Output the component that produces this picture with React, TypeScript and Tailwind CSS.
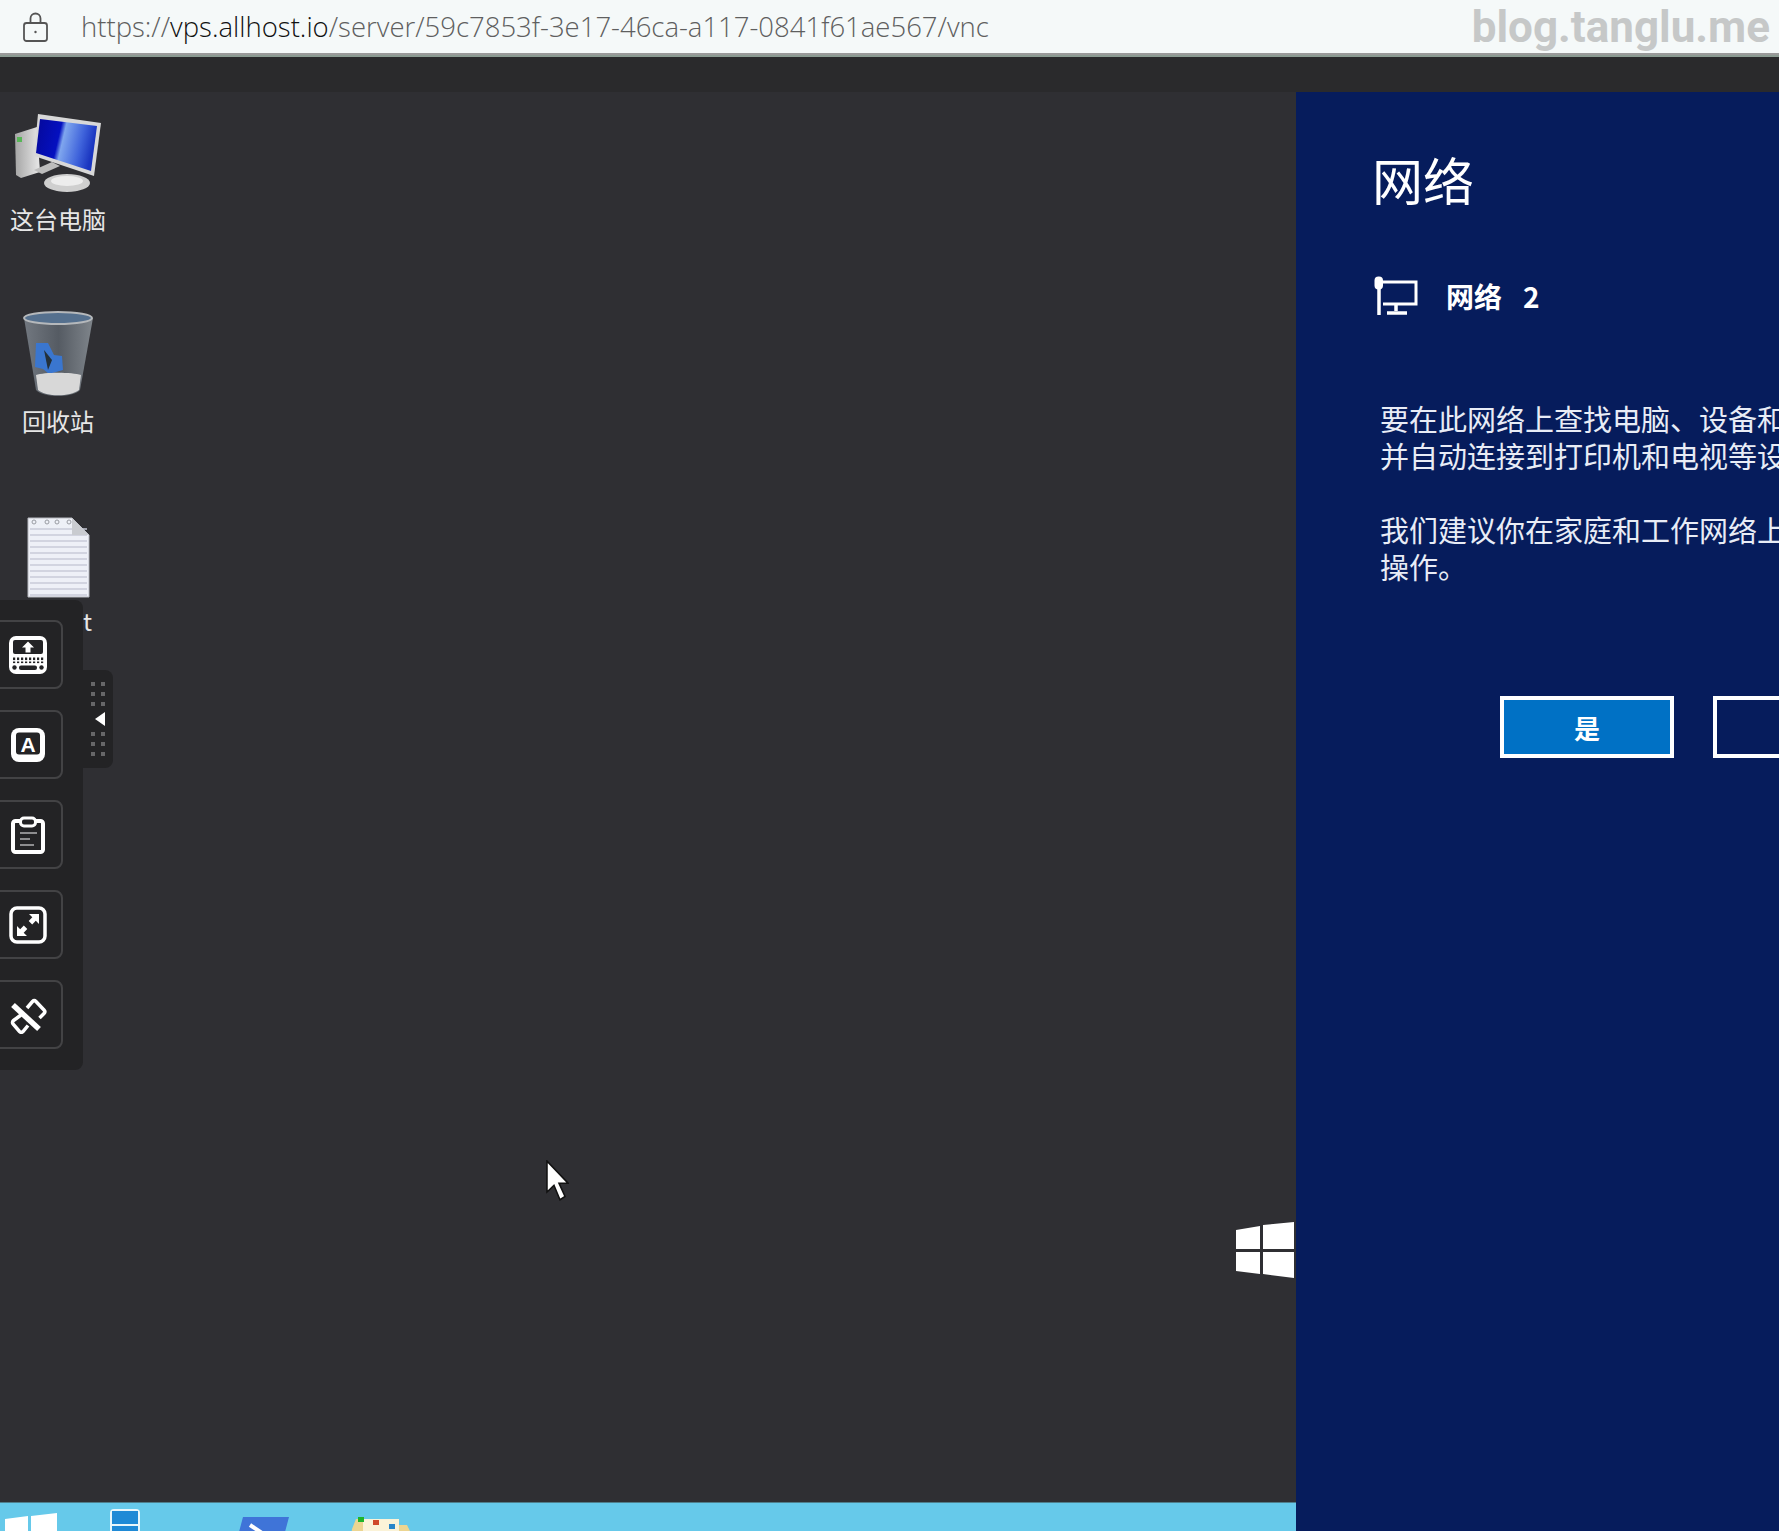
import React from "react";

const cjk = "font-['Noto_Sans_CJK_SC','Noto_Sans',sans-serif]";

function ToolButton({ children }: { children: React.ReactNode }) {
  return (
    <div className="h-[69px] w-[71px] -ml-[8px] shrink-0 rounded-lg border-2 border-[#434345] flex items-center justify-center pl-px">
      {children}
    </div>
  );
}

function KeyboardIcon() {
  return (
    <svg width="38" height="38" viewBox="0 0 38 38">
      <rect width="38" height="38" rx="7" fill="#fff" />
      <rect x="4" y="4" width="30" height="14" rx="2" fill="#232325" />
      <path d="M19 5.500l6 6h-3.500v5h-5v-5H13z" fill="#fff" />
      <g fill="#232325">
        {[5, 9, 13, 17, 21, 25, 29, 33].map((x) => (
          <rect key={x} x={x - 1} y="21.500" width="2.200" height="2.600" />
        ))}
        {[5, 9, 13, 17, 21, 25, 29, 33].map((x) => (
          <rect key={x} x={x - 1} y="25.500" width="2.200" height="1.600" />
        ))}
        <circle cx="5.500" cy="31.500" r="2.200" />
        <rect x="10" y="29.500" width="18" height="4.500" rx="2" />
        <circle cx="32.500" cy="31.500" r="2.200" />
      </g>
    </svg>
  );
}

function LetterIcon() {
  return (
    <svg width="34" height="34" viewBox="0 0 34 34">
      <rect width="34" height="34" rx="8" fill="#fff" />
      <rect x="5" y="4.500" width="24" height="22" rx="3" fill="#232325" />
      <text x="17" y="23.500" textAnchor="middle" fontFamily="Liberation Sans" fontWeight="700" fontSize="21" fill="#fff">
        A
      </text>
    </svg>
  );
}

function ClipboardIcon() {
  return (
    <svg width="34" height="38" viewBox="11 816 34 38">
      <rect x="13" y="821" width="30" height="31" rx="2.500" fill="none" stroke="#fff" strokeWidth="4" />
      <rect x="20.500" y="818" width="15" height="8" rx="3.500" fill="#232325" stroke="#fff" strokeWidth="3" />
      <path d="M20 833h17M20 839h10M20 845h14" stroke="#8d8d8f" strokeWidth="2" />
    </svg>
  );
}

function FullscreenIcon() {
  return (
    <svg width="38" height="38" viewBox="9 906 38 38">
      <rect x="11" y="908" width="34" height="34" rx="6" fill="none" stroke="#fff" strokeWidth="3.500" />
      <path d="M29 914h10v10l-3.200-3.200-3.600 3.600-3.500-3.500 3.600-3.600zM27 936H17v-10l3.200 3.200 3.600-3.600 3.500 3.500-3.600 3.600z" fill="#fff" />
    </svg>
  );
}

function DisconnectIcon() {
  return (
    <svg width="38" height="38" viewBox="9 996 38 38" fill="none" stroke="#fff">
      <path d="M27 1008l5.500-6.500a2.500 2.500 0 0 1 3.500 0l8 8.500a2.500 2.500 0 0 1 0 3.500l-4.500 4.500" strokeWidth="3.500" />
      <path d="M21 1015l-7.500 5.500a2.500 2.500 0 0 0-.5 3.500l6.500 7.500a2.500 2.500 0 0 0 3.500 0l5-6" strokeWidth="3.500" />
      <path d="M13 1005l26 24" strokeWidth="5.500" />
    </svg>
  );
}

function ComputerIcon() {
  return (
    <svg className="blur-[0.5px]" width="90" height="80" viewBox="13 112 90 80">
      <defs>
        <linearGradient id="scr" x1="0" y1="0" x2="1" y2="0.2">
          <stop offset="0" stopColor="#05089a" />
          <stop offset="0.42" stopColor="#0410c0" />
          <stop offset="0.5" stopColor="#7fa6ee" />
          <stop offset="0.8" stopColor="#3f63db" />
          <stop offset="1" stopColor="#1a35c0" />
        </linearGradient>
        <linearGradient id="tower" x1="0" y1="0" x2="1" y2="0">
          <stop offset="0" stopColor="#a5a5a5" />
          <stop offset="1" stopColor="#e8e8e8" />
        </linearGradient>
      </defs>
      <path d="M15 134l22-7 3 45-19 6-5-3z" fill="url(#tower)" />
      <rect x="17" y="137" width="5" height="5" fill="#57b657" />
      <path d="M34 170l18-8 8 4-18 8z" fill="#bdbdbd" />
      <ellipse cx="67" cy="183" rx="23" ry="9" fill="#cfcfcf" />
      <ellipse cx="67" cy="181" rx="16" ry="5" fill="#ededed" />
      <path d="M38 114l63 9-7 53-60-20z" fill="#d8d8d8" />
      <path d="M40 119l57 7-6 45-55-18z" fill="url(#scr)" />
    </svg>
  );
}

function BinIcon() {
  return (
    <svg className="blur-[0.5px]" width="72" height="92" viewBox="22 308 72 92">
      <defs>
        <linearGradient id="bin" x1="0" y1="0" x2="1" y2="0">
          <stop offset="0" stopColor="#727880" />
          <stop offset="0.5" stopColor="#555b63" />
          <stop offset="1" stopColor="#7f858b" />
        </linearGradient>
      </defs>
      <path d="M24 318l12 72c8 8 36 8 44 0l13-72z" fill="url(#bin)" />
      <ellipse cx="58" cy="318" rx="34" ry="6" fill="#55708e" stroke="#b5b8bb" strokeWidth="2" />
      <path d="M36 343h12l6 12 8 1 1 14-14 4-6-5-8-2z" fill="#3a76cf" />
      <path d="M44 350l8 10-4 10z" fill="#23303a" />
      <path d="M36 375c8-3 36-3 45 0l-2 15c-9 7-33 7-41 0z" fill="#d8d8d8" />
    </svg>
  );
}

function TextFileIcon() {
  const lines = [9, 15, 21, 27, 33, 39, 45, 51, 57, 63, 69, 75];
  return (
    <svg className="blur-[0.5px]" width="63" height="82" viewBox="0 0 63 82">
      <path d="M1 1h44l17 17v62H1z" fill="#eef0f7" stroke="#b7b9c0" />
      {lines.map((y) => (
        <path key={y} d={`M3 ${y + 3}H60`} stroke="#c8cbd8" strokeWidth="1.500" />
      ))}
      {[7, 18, 26, 36].map((x, i) => (
        <circle key={i} cx={x + i * 2} cy="5" r="2" fill="none" stroke="#9a9ca3" />
      ))}
      <path d="M45 1v17h17z" fill="#c9cbd0" />
    </svg>
  );
}

export default function App() {
  return (
    <div className="w-full h-[1531px] flex flex-col overflow-hidden bg-[#2f2f33]">
      {/* address bar */}
      <div className="h-[53px] shrink-0 bg-[#f5f9f9] flex items-center relative">
        <svg className="ml-[23px]" width="26" height="30" viewBox="0 0 26 30" fill="none" stroke="#555" strokeWidth="1.800">
          <rect x="1" y="11" width="23" height="18" rx="2.500" />
          <path d="M7.500 11V6.500a5 5 0 0 1 10 0V11" />
          <circle cx="12.500" cy="20" r="1.200" fill="#555" stroke="none" />
        </svg>
        <div className="ml-[32px] font-['Open_Sans',sans-serif] font-light text-[27.500px] leading-none text-[#5f5f5f] whitespace-nowrap">
          https://<span className="text-[#111]">vps.allhost.io</span>/server/59c7853f-3e17-46ca-a117-0841f61ae567/vnc
        </div>
        <div className="ml-auto mr-[9px] font-['Roboto',sans-serif] font-bold text-[44px] leading-none text-[#c6c8c8] whitespace-nowrap">
          blog.tanglu.me
        </div>
      </div>
      <div className="h-[2px] shrink-0 bg-[#9a9a9a]" />
      <div className="h-[2px] shrink-0 bg-[#8b9b92]" />
      <div className="h-[35px] shrink-0 bg-[#2a2a2c]" />

      {/* remote screen */}
      <div className="flex-1 flex min-h-0">
        <div className="w-[1296px] shrink-0 flex flex-col">
          <div className="flex-1 relative">
            {/* desktop icons */}
            <div className={`absolute left-0 top-[20px] w-[116px] flex flex-col items-center text-[24px] leading-[30px] text-[#e6e6e6] ${cjk}`}>
              <ComputerIcon />
              <div className="mt-[12px]">这台电脑</div>
              <div className="mt-[74px]">
                <BinIcon />
              </div>
              <div className="mt-[6px]">回收站</div>
              <div className="mt-[81px]">
                <TextFileIcon />
              </div>
              <div className="mt-[7px] self-end pr-[24px]">t</div>
            </div>

            {/* noVNC control bar */}
            <div className="absolute left-0 top-[508px] h-[470px] w-[83px] bg-[#232325] rounded-r-lg flex flex-col gap-[21px] pt-[20px] overflow-hidden">
              <ToolButton>
                <KeyboardIcon />
              </ToolButton>
              <ToolButton>
                <LetterIcon />
              </ToolButton>
              <ToolButton>
                <ClipboardIcon />
              </ToolButton>
              <ToolButton>
                <FullscreenIcon />
              </ToolButton>
              <ToolButton>
                <DisconnectIcon />
              </ToolButton>
            </div>
            <div className="absolute left-[83px] top-[578px] h-[98px] w-[30px] bg-[#232325] rounded-r-lg flex flex-col items-center pt-[12px]">
              <div className="grid grid-cols-2 gap-x-[6px] gap-y-[6px]">
                {[0, 1, 2, 3, 4, 5].map((i) => (
                  <div key={i} className="w-[4px] h-[4px] bg-[#666668]" />
                ))}
              </div>
              <svg className="my-[6px] ml-[4px]" width="10" height="14" viewBox="0 0 10 14">
                <path d="M10 0v14L0 7z" fill="#fff" />
              </svg>
              <div className="grid grid-cols-2 gap-x-[6px] gap-y-[6px]">
                {[0, 1, 2, 3, 4, 5].map((i) => (
                  <div key={i} className="w-[4px] h-[4px] bg-[#666668]" />
                ))}
              </div>
            </div>

            {/* arrow cursor */}
            <svg className="absolute left-[545px] top-[1068px]" width="24" height="42" viewBox="0 0 24 38" preserveAspectRatio="none">
              <path d="M2 1v28l7-6 6 13 5-3-6-12h9z" fill="#fff" stroke="#111" strokeWidth="1.500" />
            </svg>

            {/* start hint */}
            <svg className="absolute left-[1236px] top-[1130px] blur-[0.5px]" width="58" height="56" viewBox="0 0 58 56">
              <path d="M0 8l24-4v23H0zM27 3L58 0v27H27zM0 30h24v22L0 49zM27 30h31v26l-31-4z" fill="#fff" />
            </svg>
          </div>

          {/* taskbar */}
          <div className="h-[29px] shrink-0 bg-[#66c9ea] border-t border-[#4f7f8c] flex items-start overflow-hidden">
            <svg className="ml-[5px] mt-[10px]" width="52" height="48" viewBox="0 0 52 48">
              <path d="M0 6l23-3v21H0zM26 3L52 0v24H26zM0 27h23v18L0 42zM26 27h26v21l-26-3z" fill="#fff" />
            </svg>
            <div className="ml-[53px] mt-[6px] w-[30px] h-[40px] border-2 border-[#e8f6fb] rounded-sm bg-[#e8f6fb] flex flex-col gap-[2px]">
              <div className="h-[13px] bg-[#1f8ad6]" />
              <div className="h-[13px] bg-[#1f8ad6]" />
            </div>
            <svg className="ml-[95px] mt-[14px]" width="54" height="30" viewBox="0 0 54 30">
              <path d="M8 0h46l-8 30H0z" fill="#3f74d8" />
              <path d="M15 8l12 8" stroke="#fff" strokeWidth="4" />
            </svg>
            <svg className="ml-[60px] mt-[12px]" width="62" height="30" viewBox="0 0 62 30">
              <path d="M3 14l4-10h28l3 6h20l3 6v14H1z" fill="#ecd591" />
              <path d="M14 4h36v12H14z" fill="#fbf3d8" />
              <rect x="9" y="2" width="6" height="5" fill="#1fb52a" />
              <rect x="24" y="5" width="6" height="5" fill="#d0492a" />
              <rect x="40" y="9" width="6" height="5" fill="#2a86c9" />
            </svg>
          </div>
        </div>

        {/* network side panel */}
        <div className={`flex-1 min-w-0 bg-[#061c5c] text-white overflow-hidden ${cjk}`}>
          <h1 className="ml-[76px] mt-[54px] text-[51px] leading-[66px] font-normal whitespace-nowrap">网络</h1>
          <div className="ml-[78px] mt-[64px] flex items-center whitespace-nowrap">
            <svg width="44" height="40" viewBox="0 0 44 40" fill="none" stroke="#fff">
              <path d="M5 10v29" strokeWidth="3.500" />
              <rect x="1.500" y="1.500" width="6.500" height="11" rx="3" fill="#fff" strokeWidth="2" />
              <path d="M9 6h33v22H9" strokeWidth="3" />
              <path d="M22 28v7M13 37h20" strokeWidth="3.500" />
            </svg>
            <div className="ml-[28px] text-[28px] leading-[36px] font-bold">
              网络<span className="ml-[21px]">2</span>
            </div>
          </div>
          <div className="ml-[84px] mt-[84px] text-[29px] leading-[37px] text-[#e8ecf6] whitespace-nowrap">
            <p>要在此网络上查找电脑、设备和</p>
            <p>并自动连接到打印机和电视等设</p>
            <p className="mt-[37px]">我们建议你在家庭和工作网络上</p>
            <p>操作。</p>
          </div>
          <div className="ml-[204px] mt-[111px] flex gap-[39px]">
            <button className="w-[174px] h-[62px] shrink-0 border-4 border-white bg-[#0071c5] text-[26px] font-bold text-white">
              是
            </button>
            <div className="w-[174px] h-[62px] shrink-0 border-4 border-white" />
          </div>
        </div>
      </div>
    </div>
  );
}
